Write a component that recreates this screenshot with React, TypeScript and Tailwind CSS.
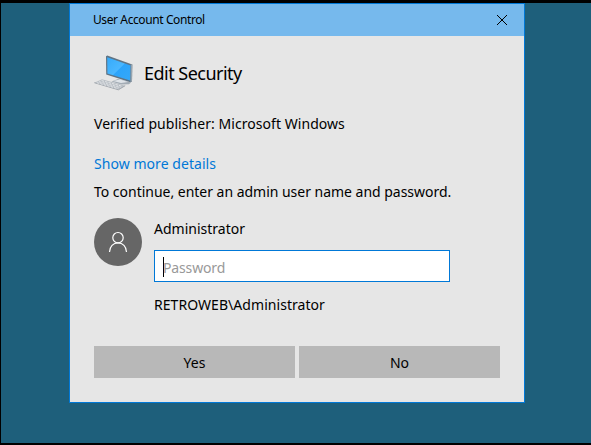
function ComputerIcon() {
  return (
    <svg width="40" height="38" viewBox="0 0 40 38" className="shrink-0">
      <defs>
        <linearGradient id="screen" x1="0" y1="0" x2="1" y2="1">
          <stop offset="0" stopColor="#35aafa" />
          <stop offset="0.5" stopColor="#4ab7ff" />
          <stop offset="0.52" stopColor="#2ca4fb" />
          <stop offset="1" stopColor="#35a8f8" />
        </linearGradient>
      </defs>
      <path d="M17.5 27.5 L24 25 L37 28.5 L35 30.2 L27 30.5Z" fill="#a3acb5" />
      <path d="M19 27 L26 25.4 L34 27.9 L27 29Z" fill="#dfe4e9" />
      <path d="M12 2.2 L13.3 1.6 L38.3 10.6 L38 27.6 L36.4 28.2 L12.2 20.6Z" fill="#5f7485" />
      <path d="M36.7 10.6 L38.3 10.6 L38 27.6 L36.5 28.2Z" fill="#98a4ae" />
      <path d="M13.2 3.3 L36.5 11.4 L36.2 26.4 L13.4 19.6Z" fill="url(#screen)" />
      <path d="M8 25.2 L31.2 31.7 L24.4 35.8 L0.3 28.7Z" fill="#b9bfc5" />
      <path d="M0.3 28.7 L24.4 35.8 L31.2 31.7" fill="none" stroke="#959ca3" strokeWidth="0.8" />
      <path d="M7.6 26.6 L28.4 32.4 M5 27.7 L26.4 33.6 M2.8 28.7 L24.2 34.7" stroke="#e6e9ec" strokeWidth="0.9" strokeDasharray="2.5 1.1" />
    </svg>
  );
}

function UserAvatar() {
  return (
    <div className="flex size-12 shrink-0 items-center justify-center rounded-full bg-[#666666]">
      <svg width="20" height="22" viewBox="0 0 20 22" fill="none" stroke="#ffffff" strokeWidth="1.2">
        <circle cx="10" cy="6.7" r="5.2" />
        <path d="M1.5 21 C1.7 15.4 5.2 11.9 10 11.9 C14.8 11.9 18.3 15.4 18.5 21" />
      </svg>
    </div>
  );
}

export default function App() {
  return (
    <div className="flex h-[445px] w-[591px] items-start justify-start overflow-hidden border-t-[3px] border-b-2 border-l border-black bg-[#1e5f7b] pl-[68px] font-['Noto_Sans',sans-serif] text-sm/5 whitespace-nowrap text-black">
      <section className="h-[400px] w-[456px] border border-[#0078d7] bg-[#e6e6e6]">
        <header className="flex h-8 items-center justify-between bg-[#76b9ed] pr-[17px] pl-[23px]">
          <h1 className="text-xs/4 tracking-[-0.4px]">User Account Control</h1>
          <button aria-label="Close">
            <svg width="10" height="10" viewBox="0 0 10 10" stroke="#000000" strokeWidth="1">
              <path d="M0 0 L10 10 M10 0 L0 10" />
            </svg>
          </button>
        </header>
        <main className="px-6 pt-[18px]">
          <div className="flex h-[38px] items-center gap-[10px]">
            <ComputerIcon />
            <h2 className="text-lg/6 tracking-[-0.52px]">Edit Security</h2>
          </div>
          <p className="mt-[22px] tracking-[0.05px]">Verified publisher: Microsoft Windows</p>
          <a className="mt-5 block tracking-[0.05px] text-[#0078d7]">Show more details</a>
          <p className="mt-2 tracking-[-0.02px]">To continue, enter an admin user name and password.</p>
          <div className="mt-4 flex gap-3">
            <UserAvatar />
            <div className="w-[296px]">
              <p className="mt-px">Administrator</p>
              <div className="mt-[11px] flex h-8 items-center border border-[#0078d7] bg-white pt-1 pl-2">
                <span className="-mt-0.5 h-5 w-px bg-black" />
                <span className="-ml-px tracking-[-0.15px] text-[#999999]">Password</span>
              </div>
              <p className="mt-[13px] tracking-[0.05px]">RETROWEB\Administrator</p>
            </div>
          </div>
          <div className="mt-[31px] flex gap-1">
            <button className="h-8 w-[201px] bg-[#b8b8b8] pt-0.5">Yes</button>
            <button className="h-8 w-[201px] bg-[#b8b8b8] pt-0.5">No</button>
          </div>
        </main>
      </section>
    </div>
  );
}
